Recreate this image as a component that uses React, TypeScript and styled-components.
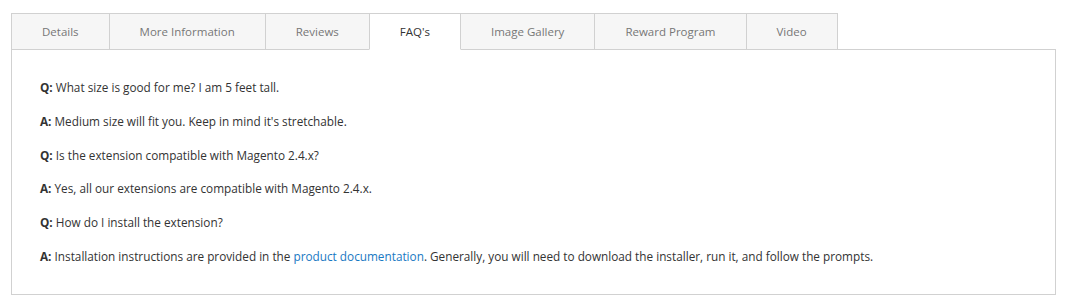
import React, { useState } from 'react';
import styled, { createGlobalStyle, css } from 'styled-components';

const GlobalStyle = createGlobalStyle`
  html, body {
    margin: 0;
    padding: 0;
    background: #ffffff;
  }
  body {
    font-family: 'Open Sans', 'Liberation Sans', Arial, sans-serif;
    color: #333333;
  }
`;

const Page = styled.div`
  padding: 13px 24px 11px 11px;
`;

const TabList = styled.div`
  display: flex;
  align-items: flex-end;
  position: relative;
  z-index: 1;
`;

const Tab = styled.button<{ active?: boolean }>`
  height: 37px;
  padding: 0 30px 1px;
  margin: 0 -1px 0 0;
  border: 1px solid #d1d1d1;
  background: #f6f6f6;
  color: #777777;
  font-family: inherit;
  font-size: 11.5px;
  font-weight: 400;
  line-height: 33px;
  cursor: pointer;
  white-space: nowrap;

  ${(props) =>
    props.active &&
    css`
      background: #ffffff;
      color: #333333;
      border-bottom-color: #ffffff;
      position: relative;
      z-index: 2;
    `}
`;

const Panel = styled.div`
  margin-top: -1px;
  border: 1px solid #d1d1d1;
  padding: 29px 28px 29px;
  font-size: 11.78px;
  line-height: 17px;
`;

const Line = styled.p`
  margin: 0 0 16.8px;

  &:last-child {
    margin-bottom: 0;
  }
`;

const Label = styled.strong`
  font-weight: 700;
`;

const Link = styled.a`
  color: #1979c3;
  text-decoration: none;
`;

const tabs = ['Details', 'More Information', 'Reviews', "FAQ's", 'Image Gallery', 'Reward Program', 'Video'];

const App: React.FC = () => {
  const [current, setCurrent] = useState("FAQ's");

  return (
    <Page>
      <GlobalStyle />
      <TabList>
        {tabs.map((t) => (
          <Tab key={t} active={t === current} onClick={() => setCurrent(t)}>
            {t}
          </Tab>
        ))}
      </TabList>
      <Panel>
        <Line>
          <Label>Q:</Label> What size is good for me? I am 5 feet tall.
        </Line>
        <Line>
          <Label>A:</Label> Medium size will fit you. Keep in mind it's stretchable.
        </Line>
        <Line>
          <Label>Q:</Label> Is the extension compatible with Magento 2.4.x?
        </Line>
        <Line>
          <Label>A:</Label> Yes, all our extensions are compatible with Magento 2.4.x.
        </Line>
        <Line>
          <Label>Q:</Label> How do I install the extension?
        </Line>
        <Line>
          <Label>A:</Label> Installation instructions are provided in the{' '}
          <Link href="#">product documentation</Link>. Generally, you will need to download the installer, run it, and
          follow the prompts.
        </Line>
      </Panel>
    </Page>
  );
};

export default App;
